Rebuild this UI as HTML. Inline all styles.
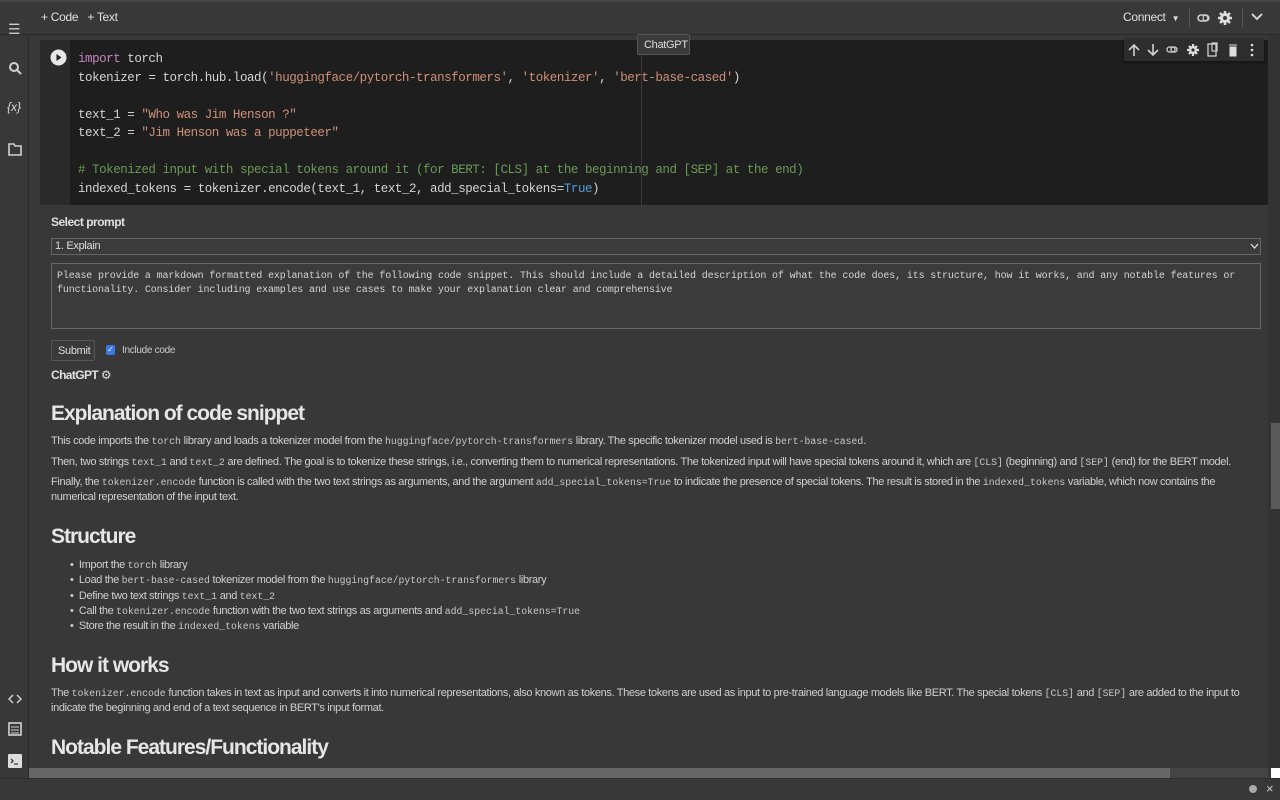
<!DOCTYPE html>
<html><head><meta charset="utf-8"><style>
*{margin:0;padding:0;box-sizing:border-box}
body{width:1280px;height:800px;background:#383838;color:#d6d6d6;font-family:"Liberation Sans",Arial,sans-serif;position:relative;overflow:hidden}
.a{position:absolute;white-space:nowrap}
.s{font-size:11px;letter-spacing:-0.35px;color:#d0d0d0}
code,.m{font-family:"Liberation Mono",monospace}
.s code{font-size:9.8px;letter-spacing:0;color:#c8c8c8}
.cd{font-family:"Liberation Mono",monospace;font-size:12.5px;letter-spacing:-0.46px;color:#d4d4d4}
.kw{color:#c586c0}.st{color:#ce9178}.cm{color:#6a9955}.bl{color:#569cd6}
h1{font-size:21px;font-weight:bold;letter-spacing:-1px;color:#e6e6e6}
ul{list-style:none}
.ic{fill:none;stroke:#d0d0d0;stroke-width:1.6}
</style></head><body>
<div class="a" style="left:0;top:0;width:1280px;height:35px;background:#383838;border-top:2px solid #444;border-bottom:1px solid #2a2a2a"></div>
<div class="a" style="left:41px;top:10px;font-size:12px;letter-spacing:-0.3px;color:#e0e0e0">+ Code&nbsp;&nbsp;&nbsp;+ Text</div>
<div class="a" style="left:1123px;top:10px;font-size:12px;letter-spacing:-0.3px;color:#e0e0e0">Connect&nbsp;&nbsp;<span style="font-size:8px">▼</span></div>
<div class="a" style="left:1189px;top:8px;width:1px;height:20px;background:#555"></div>
<div class="a" style="left:1242px;top:8px;width:1px;height:20px;background:#555"></div>
<svg class="a" style="left:1196px;top:10px" width="44" height="16"><rect class="ic" x="2" y="5" width="10" height="6" rx="3"/><rect class="ic" x="7" y="5" width="6" height="6" rx="3" style="stroke-width:1.2"/><circle cx="29" cy="8" r="5" fill="#ddd"/><path d="M29 1v14M22 8h14M24 3l10 10M34 3L24 13" stroke="#ddd" stroke-width="2.5"/><circle cx="29" cy="8" r="2" fill="#383838"/></svg>
<svg class="a" style="left:1250px;top:12px" width="14" height="10"><path d="M2 2l5 5 5-5" class="ic" style="stroke-width:2"/></svg>
<div class="a" style="left:0;top:35px;width:29px;height:743px;border-right:1px solid #2a2a2a;background:#383838"></div>
<div class="a" style="left:8px;top:21px;font-size:14px;color:#ccc">☰</div>
<svg class="a" style="left:8px;top:61px" width="14" height="14"><circle cx="6" cy="6" r="4" class="ic" style="stroke-width:2"/><path d="M9 9l4 4" class="ic" style="stroke-width:2"/></svg>
<div class="a" style="left:7px;top:100px;font-size:12px;color:#ddd;font-style:italic">{<i>x</i>}</div>
<svg class="a" style="left:8px;top:142px" width="14" height="14"><path d="M1 2h5l1 2h6v9H1z" class="ic"/></svg>
<svg class="a" style="left:8px;top:693px" width="14" height="12"><path d="M5 2L1 6l4 4M9 2l4 4-4 4" class="ic" style="stroke-width:1.5"/></svg>
<svg class="a" style="left:8px;top:722px" width="14" height="14"><rect x="1" y="1" width="12" height="12" class="ic"/><path d="M3 5h8M3 8h8M3 11h8" class="ic" style="stroke-width:1"/></svg>
<svg class="a" style="left:8px;top:754px" width="14" height="14"><rect x="0" y="0" width="14" height="14" rx="1" fill="#ddd"/><path d="M3 5l2 2-2 2M6 10h4" stroke="#383838" stroke-width="1.3" fill="none"/></svg>
<div class="a" style="left:40px;top:40px;width:1228px;height:165px;background:#1e1e1e"></div>
<div class="a" style="left:40px;top:40px;width:30px;height:165px;background:#2b2b2b"></div>
<div class="a" style="left:641px;top:40px;width:1px;height:165px;background:#3a3a3a"></div>
<svg class="a" style="left:50px;top:49px" width="17" height="17"><circle cx="8.5" cy="8.5" r="8" fill="#e8e8e8"/><path d="M6.5 5l5 3.5-5 3.5z" fill="#222"/></svg>
<div class="a cd" style="left:78px;top:50px;line-height:18.5px">
<div><span class="kw">import</span> torch</div>
<div>tokenizer = torch.hub.load(<span class="st">'huggingface/pytorch-transformers'</span>, <span class="st">'tokenizer'</span>, <span class="st">'bert-base-cased'</span>)</div>
<div>&nbsp;</div>
<div>text_1 = <span class="st">"Who was Jim Henson ?"</span></div>
<div>text_2 = <span class="st">"Jim Henson was a puppeteer"</span></div>
<div>&nbsp;</div>
<div class="cm"># Tokenized input with special tokens around it (for BERT: [CLS] at the beginning and [SEP] at the end)</div>
<div>indexed_tokens = tokenizer.encode(text_1, text_2, add_special_tokens=<span class="bl">True</span>)</div>
</div>
<div class="a" style="left:637px;top:34px;width:53px;height:21px;background:#3a3a3a;border:1px solid #555;border-radius:2px;font-size:11px;letter-spacing:-0.3px;color:#ddd;padding:4px 0 0 6px">ChatGPT</div>
<div class="a" style="left:1124px;top:39px;width:140px;height:22px;background:#2d2d2d;box-shadow:0 1px 3px #111"></div>
<svg class="a" style="left:1126px;top:42px" width="136" height="16">
<path d="M8 14V3M3 8l5-5 5 5" class="ic"/>
<path d="M27 2v11M22 8l5 5 5-5" class="ic"/>
<rect x="41" y="5" width="8" height="5" rx="2.5" class="ic" style="stroke-width:1.3"/><rect x="45" y="5" width="6" height="5" rx="2.5" class="ic" style="stroke-width:1.3"/>
<circle cx="67" cy="8" r="4" fill="#ddd"/><path d="M67 2v12M61 8h12M63 4l8 8M71 4l-8 8" stroke="#ddd" stroke-width="2.2"/><circle cx="67" cy="8" r="1.6" fill="#2d2d2d"/>
<rect x="82" y="2" width="8" height="12" class="ic" style="stroke-width:1.3"/><rect x="86" y="1" width="5" height="8" class="ic" style="stroke-width:1.2"/>
<path d="M103 3h8M104 5h6v9h-6z" fill="#ddd" stroke="#ddd"/>
<circle cx="126" cy="3" r="1.3" fill="#ddd"/><circle cx="126" cy="8" r="1.3" fill="#ddd"/><circle cx="126" cy="13" r="1.3" fill="#ddd"/>
</svg>
<div class="a" style="left:51px;top:215px;font-size:12px;font-weight:bold;letter-spacing:-0.5px;color:#e0e0e0">Select prompt</div>
<div class="a" style="left:51px;top:238px;width:1210px;height:17px;border:1px solid #666;background:#3b3b3b;font-size:11px;letter-spacing:-0.3px;color:#ddd;padding:1px 0 0 3px">1. Explain</div>
<svg class="a" style="left:1250px;top:243px" width="9" height="7"><path d="M1 1l3.5 4L8 1" stroke="#ddd" stroke-width="1.3" fill="none"/></svg>
<div class="a m" style="left:51px;top:263px;width:1210px;height:66px;border:1px solid #666;background:#3b3b3b;font-size:10px;letter-spacing:-0.14px;color:#d4d4d4;padding:6px 0 0 5px;line-height:14px;white-space:normal">Please provide a markdown formatted explanation of the following code snippet. This should include a detailed description of what the code does, its structure, how it works, and any notable features or functionality. Consider including examples and use cases to make your explanation clear and comprehensive</div>
<div class="a" style="left:51px;top:340px;width:44px;height:21px;border:1px solid #555;border-radius:2px;background:#3a3a3a;font-size:11px;letter-spacing:-0.3px;color:#ddd;padding:4px 0 0 6px">Submit</div>
<div class="a" style="left:106px;top:345px;width:9px;height:10px;background:#3b78e7;border-radius:2px;color:#fff;font-size:8px;line-height:10px;text-align:center">✓</div>
<div class="a" style="left:122px;top:345px;font-size:10px;letter-spacing:-0.3px;color:#ccc">Include code</div>
<div class="a" style="left:51px;top:368px;font-size:12px;font-weight:bold;letter-spacing:-0.6px;color:#e0e0e0">ChatGPT <span style="font-weight:normal;font-size:12px">⚙</span></div>
<h1 class="a" style="left:51px;top:402px">Explanation of code snippet</h1>
<div class="a s" style="left:51px;top:435px">This code imports the <code>torch</code> library and loads a tokenizer model from the <code>huggingface/pytorch-transformers</code> library. The specific tokenizer model used is <code>bert-base-cased</code>.</div>
<div class="a s" style="left:51px;top:456px">Then, two strings <code>text_1</code> and <code>text_2</code> are defined. The goal is to tokenize these strings, i.e., converting them to numerical representations. The tokenized input will have special tokens around it, which are <code>[CLS]</code> (beginning) and <code>[SEP]</code> (end) for the BERT model.</div>
<div class="a s" style="left:51px;top:476px">Finally, the <code>tokenizer.encode</code> function is called with the two text strings as arguments, and the argument <code>add_special_tokens=True</code> to indicate the presence of special tokens. The result is stored in the <code>indexed_tokens</code> variable, which now contains the</div>
<div class="a s" style="left:51px;top:491px">numerical representation of the input text.</div>
<h1 class="a" style="left:51px;top:525px">Structure</h1>
<ul class="a s" style="left:70px;top:558px;line-height:15.3px">
<li>•&nbsp;&nbsp;Import the <code>torch</code> library</li>
<li>•&nbsp;&nbsp;Load the <code>bert-base-cased</code> tokenizer model from the <code>huggingface/pytorch-transformers</code> library</li>
<li>•&nbsp;&nbsp;Define two text strings <code>text_1</code> and <code>text_2</code></li>
<li>•&nbsp;&nbsp;Call the <code>tokenizer.encode</code> function with the two text strings as arguments and <code>add_special_tokens=True</code></li>
<li>•&nbsp;&nbsp;Store the result in the <code>indexed_tokens</code> variable</li>
</ul>
<h1 class="a" style="left:51px;top:654px">How it works</h1>
<div class="a s" style="left:51px;top:687px">The <code>tokenizer.encode</code> function takes in text as input and converts it into numerical representations, also known as tokens. These tokens are used as input to pre-trained language models like BERT. The special tokens <code>[CLS]</code> and <code>[SEP]</code> are added to the input to</div>
<div class="a s" style="left:51px;top:702px">indicate the beginning and end of a text sequence in BERT's input format.</div>
<h1 class="a" style="left:51px;top:736px">Notable Features/Functionality</h1>
<div class="a" style="left:1268px;top:35px;width:12px;height:733px;background:#333"></div>
<div class="a" style="left:1271px;top:423px;width:9px;height:86px;background:#5a5a5a"></div>
<div class="a" style="left:29px;top:768px;width:1239px;height:10px;background:#444"></div>
<div class="a" style="left:29px;top:768px;width:1141px;height:10px;background:#666"></div>
<div class="a" style="left:1271px;top:768px;width:9px;height:10px;background:#fff"></div>
<div class="a" style="left:0;top:778px;width:1280px;height:22px;background:#383838;border-top:1px solid #2e2e2e"></div>
<div class="a" style="left:1249px;top:785px;width:8px;height:8px;border-radius:50%;background:#aaa"></div>
<div class="a" style="left:1266px;top:781px;font-size:13px;color:#ccc">×</div>
</body></html>
